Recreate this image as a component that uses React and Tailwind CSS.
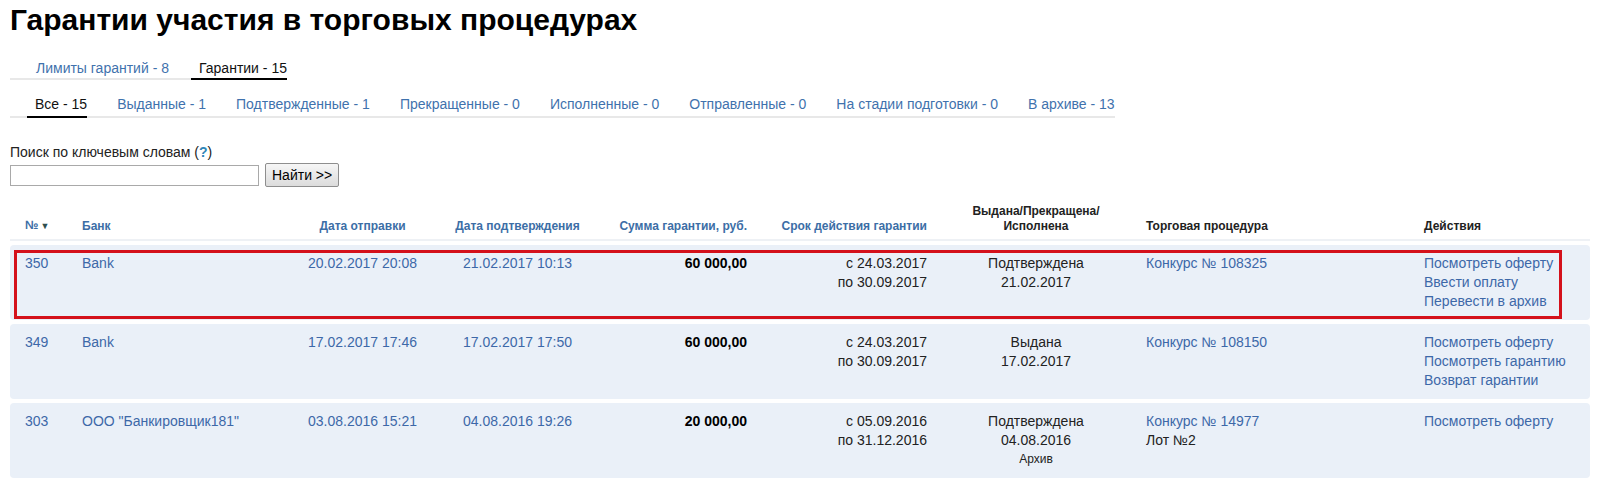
import React from 'react';

const COLS = 'grid grid-cols-[62px_218px_145px_165px_157px_180px_198px_278px_177px]';

const rows = [
  {
    id: '350',
    bank: 'Bank',
    sent: '20.02.2017 20:08',
    confirmed: '21.02.2017 10:13',
    sum: '60 000,00',
    term: ['с 24.03.2017', 'по 30.09.2017'],
    status: ['Подтверждена', '21.02.2017'],
    proc: 'Конкурс № 108325',
    actions: ['Посмотреть оферту', 'Ввести оплату', 'Перевести в архив'],
    marked: true,
  },
  {
    id: '349',
    bank: 'Bank',
    sent: '17.02.2017 17:46',
    confirmed: '17.02.2017 17:50',
    sum: '60 000,00',
    term: ['с 24.03.2017', 'по 30.09.2017'],
    status: ['Выдана', '17.02.2017'],
    proc: 'Конкурс № 108150',
    actions: ['Посмотреть оферту', 'Посмотреть гарантию', 'Возврат гарантии'],
  },
  {
    id: '303',
    bank: 'ООО "Банкировщик181"',
    sent: '03.08.2016 15:21',
    confirmed: '04.08.2016 19:26',
    sum: '20 000,00',
    term: ['с 05.09.2016', 'по 31.12.2016'],
    status: ['Подтверждена', '04.08.2016'],
    archived: true,
    proc: 'Конкурс № 14977',
    lot: 'Лот №2',
    actions: ['Посмотреть оферту'],
  },
];

function Tabs({ items, active, className }) {
  return (
    <ul className={`inline-flex gap-[22px] border-b-2 border-[#e8e8e8] ${className}`}>
      {items.map((t) => (
        <li
          key={t}
          className={`-mb-[2px] pl-2 border-b-2 ${
            t === active ? 'border-black text-[#111]' : 'border-transparent text-[#3f72ad]'
          }`}
        >
          <a href="#">{t}</a>
        </li>
      ))}
    </ul>
  );
}

export default function App() {
  return (
    <div className="min-h-screen bg-white px-[10px] font-['Liberation_Sans',Arial,sans-serif] text-[14px] leading-[16px] text-[#222]">
      {/* TITLE */}
      <h1 className="pt-[2px] text-[30px] leading-[36px] font-bold text-black">
        Гарантии участия в торговых процедурах
      </h1>

      {/* TABS */}
      <div className="mt-[22px]">
        <Tabs
          items={['Лимиты гарантий - 8', 'Гарантии - 15']}
          active="Гарантии - 15"
          className="pl-[18px] [&>li]:pb-[2px]"
        />
      </div>
      <div className="mt-[16px]">
        <Tabs
          items={[
            'Все - 15',
            'Выданные - 1',
            'Подтвержденные - 1',
            'Прекращенные - 0',
            'Исполненные - 0',
            'Отправленные - 0',
            'На стадии подготовки - 0',
            'В архиве - 13',
          ]}
          active="Все - 15"
          className="pl-[17px] [&>li]:pb-[4px]"
        />
      </div>

      {/* SEARCH */}
      <div className="mt-[26px]">
        <div>
          Поиск по ключевым словам (<a href="#" className="font-bold text-[#2f86b8]">?</a>)
        </div>
        <div className="mt-[3px] flex h-[24px] items-center gap-[6px]">
          <input type="text" className="h-[21px] w-[249px] border border-[#a9a9a9] bg-white px-1 text-[13px] outline-none" />
          <button className="h-[24px] rounded-[2px] border border-[#8e8e8e] bg-gradient-to-b from-[#f6f6f6] to-[#dcdcdc] px-[6px] text-[14px] text-black">
            Найти &gt;&gt;
          </button>
        </div>
      </div>

      {/* TABLE HEADER */}
      <div className={`${COLS} mt-[17px] items-end border-b-2 border-[#eef1f5] pb-[5px] text-[12px] leading-[15px] font-bold`}>
        <div className="pl-[15px] text-[#3c6ea6]">
          №<span className="ml-[2px] text-[9px] text-[#2f4f4f]">▼</span>
        </div>
        <div className="pl-[10px] text-[#3c6ea6]">Банк</div>
        <div className="text-center text-[#3c6ea6]">Дата отправки</div>
        <div className="text-center text-[#3c6ea6]">Дата подтверждения</div>
        <div className="pr-[10px] text-right text-[#3c6ea6]">Сумма гарантии, руб.</div>
        <div className="pr-[10px] text-right text-[#3c6ea6]">Срок действия гарантии</div>
        <div className="text-center text-[#222]">
          Выдана/Прекращена/
          <br />
          Исполнена
        </div>
        <div className="pl-[11px] text-[#222]">Торговая процедура</div>
        <div className="pl-[11px] text-[#222]">Действия</div>
      </div>

      {/* ROWS */}
      <div className="mt-[4px] flex flex-col gap-[4px]">
        {rows.map((r) => (
          <div
            key={r.id}
            className={`${COLS} relative h-[75px] rounded-[4px] bg-[#eaf0f8] pt-[9px] leading-[19px]`}
          >
            <div className="pl-[15px]">
              <a href="#" className="text-[#3d68a8]">{r.id}</a>
            </div>
            <div className="pl-[10px]">
              <a href="#" className="text-[#3d68a8]">{r.bank}</a>
            </div>
            <div className="text-center">
              <a href="#" className="text-[#3d68a8]">{r.sent}</a>
            </div>
            <div className="text-center">
              <a href="#" className="text-[#3d68a8]">{r.confirmed}</a>
            </div>
            <div className="pr-[10px] text-right font-bold text-black">{r.sum}</div>
            <div className="pr-[10px] text-right">
              {r.term.map((t) => (
                <div key={t}>{t}</div>
              ))}
            </div>
            <div className="text-center">
              {r.status.map((t) => (
                <div key={t}>{t}</div>
              ))}
              {r.archived && <div className="text-[12px]">Архив</div>}
            </div>
            <div className="pl-[11px]">
              <a href="#" className="block text-[#3d68a8]">{r.proc}</a>
              {r.lot && <div>{r.lot}</div>}
            </div>
            <div className="pl-[11px]">
              {r.actions.map((a) => (
                <a key={a} href="#" className="block text-[#3d68a8]">{a}</a>
              ))}
            </div>

            {/* highlight frame */}
            {r.marked && (
              <div className="pointer-events-none absolute top-[5px] right-[28px] bottom-[1px] left-[4px] border-[3px] border-[#d4111b]" />
            )}
          </div>
        ))}
      </div>
    </div>
  );
}
